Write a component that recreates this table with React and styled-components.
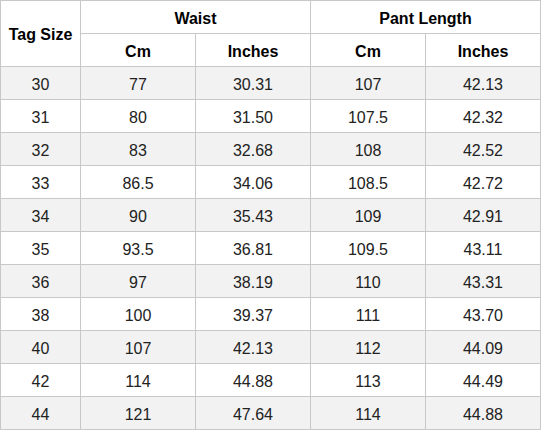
import React from 'react';
import styled, { createGlobalStyle } from 'styled-components';

const GlobalStyle = createGlobalStyle`
  html, body {
    margin: 0;
    padding: 0;
    background: #fff;
  }
  body {
    font-family: "Liberation Sans", Arial, sans-serif;
  }
`;

const Grid = styled.div`
  display: grid;
  grid-template-columns: 80px repeat(4, 115px);
  grid-auto-rows: 33px;
  width: 541px;
  box-sizing: border-box;
  border-left: 1px solid #c8c8c8;
  border-top: 1px solid #c8c8c8;
  font-size: 16px;
  color: #222;
`;

const Cell = styled.div`
  box-sizing: border-box;
  display: flex;
  align-items: center;
  justify-content: center;
  padding-top: 3px;
  border-right: 1px solid #c8c8c8;
  border-bottom: 1px solid #c8c8c8;
  background: ${({ striped }) => (striped ? '#f2f2f2' : '#fff')};
  grid-row: ${({ rowSpan }) => (rowSpan ? `span ${rowSpan}` : 'auto')};
  grid-column: ${({ colSpan }) => (colSpan ? `span ${colSpan}` : 'auto')};
`;

const HeadCell = styled(Cell)`
  font-weight: bold;
  color: #000;
`;

const rows = [
  ['30', '77', '30.31', '107', '42.13'],
  ['31', '80', '31.50', '107.5', '42.32'],
  ['32', '83', '32.68', '108', '42.52'],
  ['33', '86.5', '34.06', '108.5', '42.72'],
  ['34', '90', '35.43', '109', '42.91'],
  ['35', '93.5', '36.81', '109.5', '43.11'],
  ['36', '97', '38.19', '110', '43.31'],
  ['38', '100', '39.37', '111', '43.70'],
  ['40', '107', '42.13', '112', '44.09'],
  ['42', '114', '44.88', '113', '44.49'],
  ['44', '121', '47.64', '114', '44.88'],
];

export default function App() {
  return (
    <>
      <GlobalStyle />
      <Grid>
        <HeadCell rowSpan={2}>Tag Size</HeadCell>
        <HeadCell colSpan={2}>Waist</HeadCell>
        <HeadCell colSpan={2}>Pant Length</HeadCell>
        <HeadCell>Cm</HeadCell>
        <HeadCell>Inches</HeadCell>
        <HeadCell>Cm</HeadCell>
        <HeadCell>Inches</HeadCell>
        {rows.map((row, i) =>
          row.map((val, j) => (
            <Cell key={`${i}-${j}`} striped={i % 2 === 0}>
              {val}
            </Cell>
          ))
        )}
      </Grid>
    </>
  );
}
